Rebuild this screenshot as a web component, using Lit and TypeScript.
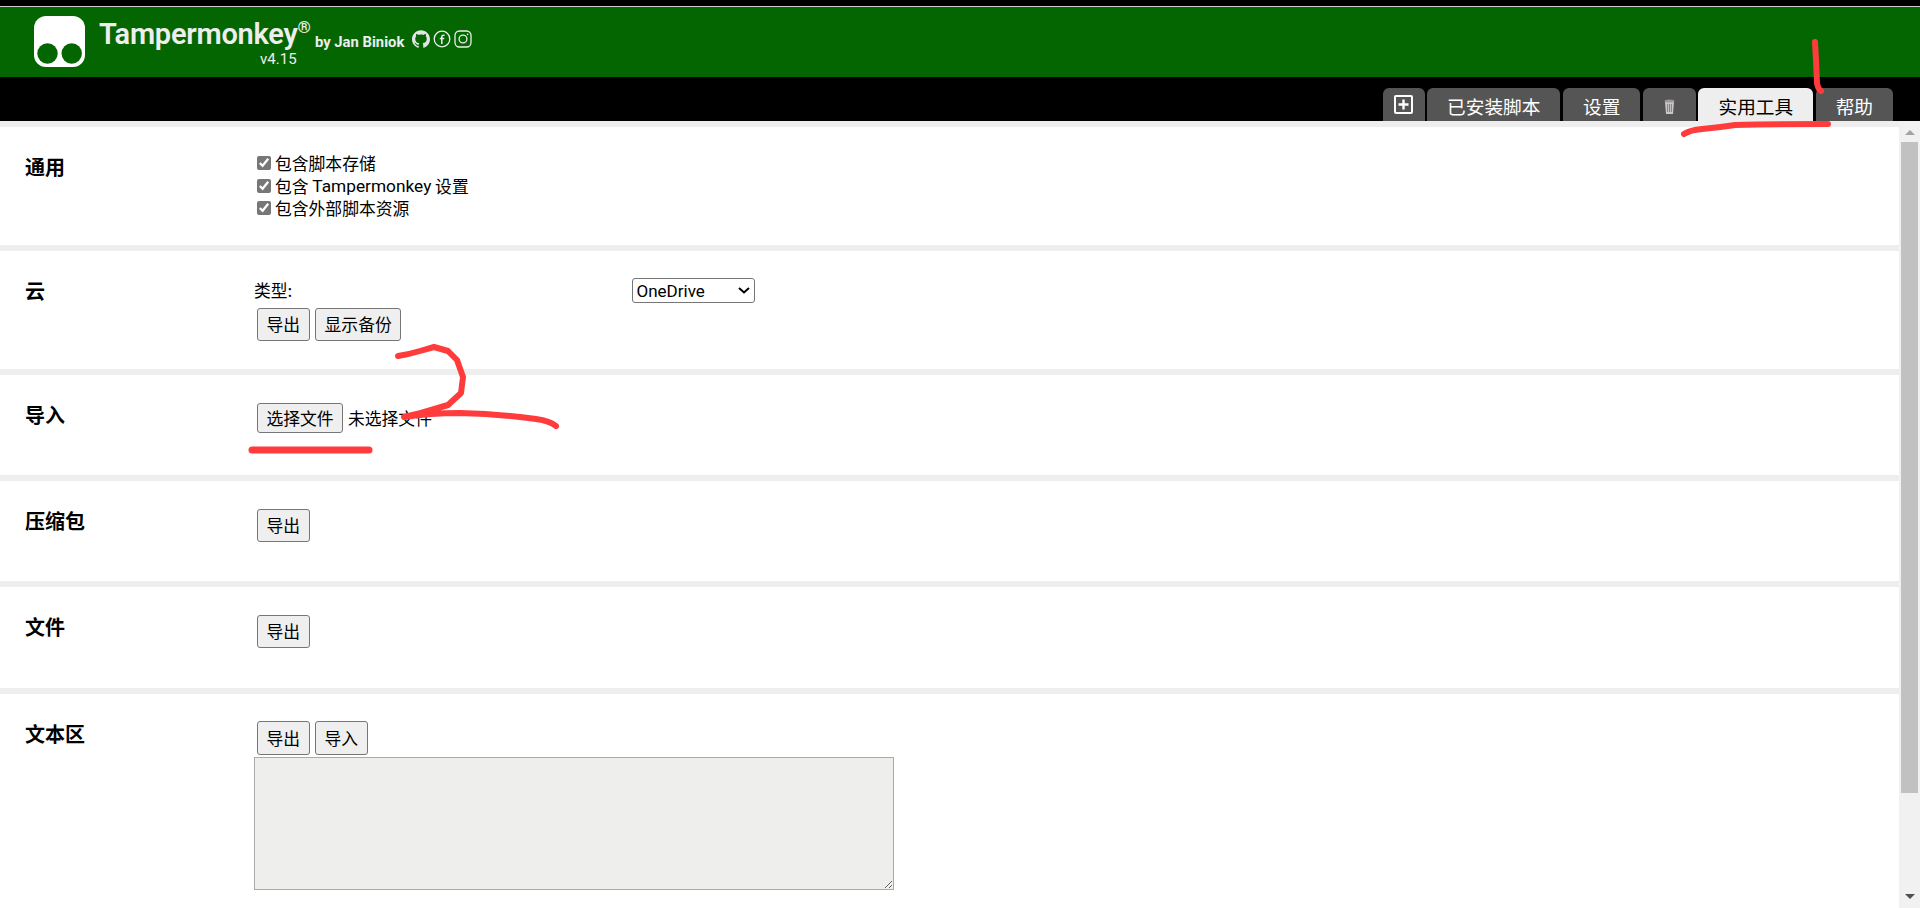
import { LitElement, html, css, svg } from "lit";
import { customElement } from "lit/decorators.js";

const GITHUB =
  "M12 .297c-6.63 0-12 5.373-12 12 0 5.303 3.438 9.8 8.205 11.385.6.113.82-.258.82-.577 0-.285-.01-1.04-.015-2.04-3.338.724-4.042-1.61-4.042-1.61C4.422 18.07 3.633 17.7 3.633 17.7c-1.087-.744.084-.729.084-.729 1.205.084 1.838 1.236 1.838 1.236 1.07 1.835 2.809 1.305 3.495.998.108-.776.417-1.305.76-1.605-2.665-.3-5.466-1.332-5.466-5.93 0-1.31.465-2.38 1.235-3.22-.135-.303-.54-1.523.105-3.176 0 0 1.005-.322 3.3 1.23.96-.267 1.98-.399 3-.405 1.02.006 2.04.138 3 .405 2.28-1.552 3.285-1.23 3.285-1.23.645 1.653.24 2.873.12 3.176.765.84 1.23 1.91 1.23 3.22 0 4.61-2.805 5.625-5.475 5.92.42.36.81 1.096.81 2.22 0 1.606-.015 2.896-.015 3.286 0 .315.21.69.825.57C20.565 22.092 24 17.592 24 12.297c0-6.627-5.373-12-12-12";

@customElement("app-root")
export class AppRoot extends LitElement {
  static styles = css`
    :host {
      display: block;
      position: relative;
      width: 1920px;
      height: 908px;
      overflow: hidden;
      background: #000;
      font-family: "Noto Sans CJK SC", "Noto Sans", sans-serif;
      font-size: 16.8px;
      color: #000;
    }
    .page { display: flex; flex-direction: column; height: 908px; }
    .strip { height: 6px; background: #000; border-bottom: 1px solid #ccc; flex: none; }
    .head {
      height: 70px;
      flex: none;
      background: #046600;
      color: #eee;
      display: flex;
      align-items: flex-start;
      padding-left: 34px;
      font-family: Roboto, sans-serif;
    }
    .logo { margin-top: 9px; margin-right: 14px; flex: none; display: block; }
    .brand { display: flex; flex-direction: column; align-items: flex-end; margin-top: 11px; }
    .word { font-size: 29px; font-weight: 600; line-height: 32px; letter-spacing: -0.25px; }
    .ver { font-size: 15px; line-height: 16px; margin-right: 1px; margin-top: 1px; }
    .reg { font-size: 17px; font-weight: 700; line-height: 20px; margin-top: 10px; }
    .by { font-size: 14.8px; font-weight: 700; line-height: 18px; margin-top: 26px; margin-left: 4px; }
    .social { display: flex; margin-top: 23px; margin-left: 8px; gap: 3px; }
    .social svg { display: block; }
    .tabs {
      height: 44px;
      flex: none;
      background: #000;
      display: flex;
      justify-content: flex-end;
      align-items: flex-end;
      gap: 2.6px;
      padding-right: 27px;
    }
    .tab {
      height: 33px;
      box-sizing: border-box;
      padding: 3px 20px 0;
      background: #555;
      color: #fff;
      border-radius: 6px 6px 0 0;
      font-size: 18.67px;
      line-height: 30px;
      display: flex;
      align-items: center;
    }
    .tab.icon { padding: 0 11.5px; }
    .tab.trash { padding: 3px 21px 0; }
    .tab.on { background: #eee; color: #000; }
    .body { flex: 1; display: flex; min-height: 0; }
    .content {
      flex: 1;
      min-width: 0;
      background: #eee;
      padding-top: 6px;
      display: flex;
      flex-direction: column;
      gap: 6px;
      overflow: hidden;
    }
    .sec {
      flex: none;
      background: #fff;
      box-sizing: border-box;
      padding: 26px 0 0 25px;
      display: grid;
      grid-template-columns: 229px 1fr;
      align-items: start;
    }
    .h118 { height: 118px; }
    .h100 { height: 100px; }
    .h101 { height: 101px; }
    .last { flex: 1; }
    .title { font-size: 20px; font-weight: 700; line-height: 28px; }
    .checks { margin-top: -1px; }
    .check {
      display: flex;
      align-items: center;
      height: 22.5px;
      line-height: 22.5px;
      white-space: pre;
    }
    .check input {
      width: 14px;
      height: 14px;
      margin: 0 4px 0 3px;
      accent-color: #777;
    }
    .lat { font-family: Roboto, sans-serif; font-size: 17.3px; }
    .row { display: flex; align-items: center; }
    .cloud { margin-top: 1px; height: 25px; }
    .label { width: 377.5px; line-height: 25px; }
    .pick { position: relative; width: 123px; height: 25px; }
    select {
      appearance: none;
      display: block;
      width: 123px;
      height: 25px;
      font: 17px Roboto, sans-serif;
      padding: 0 0 0 4px;
      background: #fff;
      color: #000;
      border: 1px solid #767676;
      border-radius: 3px;
    }
    .chev { position: absolute; left: 106px; top: 9px; pointer-events: none; }
    button {
      height: 33px;
      box-sizing: border-box;
      margin: 0 2.5px 0 3px;
      padding: 0 8.5px;
      font: 16.8px/1 "Noto Sans CJK SC", sans-serif;
      color: #000;
      background: #efefef;
      border: 1px solid #767676;
      border-radius: 3px;
      flex: none;
    }
    .btns { display: flex; margin-top: 5px; }
    .btns.top { margin-top: 2px; }
    .btns.first { margin-top: 1px; }
    .btns.first button { height: 34px; }
    .file { display: flex; align-items: center; margin-top: 2px; }
    .file button { height: 30px; width: 86px; padding: 0; margin-right: 5px; }
    textarea {
      display: block;
      width: 640px;
      height: 133px;
      box-sizing: border-box;
      margin: 2px 0 0;
      background: #eeeeec;
      border: 1px solid #aaa;
      outline: none;
    }
    .bar {
      width: 21px;
      flex: none;
      background: #f1f1f1;
      display: flex;
      flex-direction: column;
      align-items: center;
    }
    .up {
      flex: none;
      width: 0;
      height: 0;
      margin-top: 9px;
      border-left: 5px solid transparent;
      border-right: 5px solid transparent;
      border-bottom: 5px solid #a3a3a3;
    }
    .thumb { flex: none; width: 17px; height: 651px; margin-top: 7px; background: #c1c1c1; }
    .down {
      flex: none;
      width: 0;
      height: 0;
      margin-top: 101px;
      border-left: 5px solid transparent;
      border-right: 5px solid transparent;
      border-top: 5px solid #505050;
    }
    .ink {
      position: absolute;
      left: 0;
      top: 0;
      width: 1920px;
      height: 908px;
      pointer-events: none;
    }
    .ink path {
      fill: none;
      stroke: #ff3b3b;
      stroke-linecap: round;
      stroke-linejoin: round;
    }
  `;

  private btn(t: string) {
    return html`<button>${t}</button>`;
  }

  render() {
    return html`
      <div class="page">
        <div class="strip"></div>
        <div class="head">
          <svg class="logo" width="51" height="51" viewBox="0 0 51 51">
            <rect width="51" height="51" rx="12" fill="#fff"></rect>
            <circle cx="13.5" cy="37.5" r="10.2" fill="#046600"></circle>
            <circle cx="37.7" cy="37.5" r="10.2" fill="#046600"></circle>
          </svg>
          <div class="brand">
            <div class="word">Tampermonkey</div>
            <div class="ver">v4.15</div>
          </div>
          <div class="reg">®</div>
          <div class="by">by Jan Biniok</div>
          <div class="social">
            <svg width="18" height="18" viewBox="0 0 24 24"><path fill="#e4e4e4" d=${GITHUB}></path></svg>
            <svg width="18" height="18" viewBox="0 0 18 18" fill="none" stroke="#eee" stroke-width="1.3">
              <circle cx="9" cy="9" r="7.8"></circle>
              <path d="M11.6 5.2h-1.2c-1 0-1.6.6-1.6 1.6V14M6.8 8.6h4.4" stroke-width="1.5"></path>
            </svg>
            <svg width="18" height="18" viewBox="0 0 18 18" fill="none" stroke="#eee" stroke-width="1.3">
              <rect x="1" y="1" width="16" height="16" rx="4.5"></rect>
              <circle cx="9" cy="9" r="3.9"></circle>
              <circle cx="13.6" cy="4.4" r=".8" fill="#eee" stroke="none"></circle>
            </svg>
          </div>
        </div>
        <div class="tabs">
          <div class="tab icon">
            <svg width="19" height="19" viewBox="0 0 19 19">
              <rect x="1" y="1" width="17" height="17" rx="1" fill="none" stroke="#fff" stroke-width="2"></rect>
              <path d="M9.5 4.5v10M4.5 9.5h10" stroke="#fff" stroke-width="2.4"></path>
            </svg>
          </div>
          <div class="tab">已安装脚本</div>
          <div class="tab">设置</div>
          <div class="tab trash">
            <svg width="11" height="15" viewBox="0 0 11 15">
              <path d="M1 2.5h9L9 15H2z" fill="#c9c9c9"></path>
              <ellipse cx="5.5" cy="2" rx="5" ry="1.6" fill="#9a9a9a"></ellipse>
              <path d="M3.6 5v8M5.5 5v8M7.4 5v8" stroke="#b56a6a" stroke-width="1"></path>
            </svg>
          </div>
          <div class="tab on">实用工具</div>
          <div class="tab">帮助</div>
        </div>
        <div class="body">
          <div class="content">
            <section class="sec h118">
              <div class="title">通用</div>
              <div class="checks">
                <label class="check"><input type="checkbox" checked />包含脚本存储</label>
                <label class="check"><input type="checkbox" checked />包含 <span class="lat">Tampermonkey</span> 设置</label>
                <label class="check"><input type="checkbox" checked />包含外部脚本资源</label>
              </div>
            </section>
            <section class="sec h118">
              <div class="title">云</div>
              <div>
                <div class="row cloud">
                  <div class="label">类型:</div>
                  <div class="pick">
                    <select><option>OneDrive</option></select>
                    <svg class="chev" width="12" height="7" viewBox="0 0 12 7">
                      <path d="M1 1l5 4.5L11 1" fill="none" stroke="#000" stroke-width="2"></path>
                    </svg>
                  </div>
                </div>
                <div class="btns">${this.btn("导出")}${this.btn("显示备份")}</div>
              </div>
            </section>
            <section class="sec h100">
              <div class="title">导入</div>
              <div class="file"><button>选择文件</button><span>未选择文件</span></div>
            </section>
            <section class="sec h100">
              <div class="title">压缩包</div>
              <div class="btns top">${this.btn("导出")}</div>
            </section>
            <section class="sec h101">
              <div class="title">文件</div>
              <div class="btns top">${this.btn("导出")}</div>
            </section>
            <section class="sec last">
              <div class="title">文本区</div>
              <div>
                <div class="btns first">${this.btn("导出")}${this.btn("导入")}</div>
                <textarea readonly></textarea>
              </div>
            </section>
          </div>
          <div class="bar">
            <div class="up"></div>
            <div class="thumb"></div>
            <div class="down"></div>
          </div>
        </div>
      </div>
      <svg class="ink" viewBox="0 0 1920 908">
        ${svg`
          <path stroke-width="6" d="M1815 42 L1816 60 L1817 83 Q1818 89 1821 91"></path>
          <path stroke-width="6" d="M1684 134 Q1690 130 1702 129 Q1722 127 1735 125 Q1780 124 1828 124"></path>
          <path stroke-width="6" d="M398 356 Q410 354 420 351 L434 347 L448 351 L457 360 L463 377 L461 393 L448 405 L421 413 L404 417 Q430 413 460 413 Q500 414 536 419 Q550 421 556 426"></path>
          <path stroke-width="7" d="M252 450 L369 450"></path>
        `}
      </svg>
    `;
  }
}
